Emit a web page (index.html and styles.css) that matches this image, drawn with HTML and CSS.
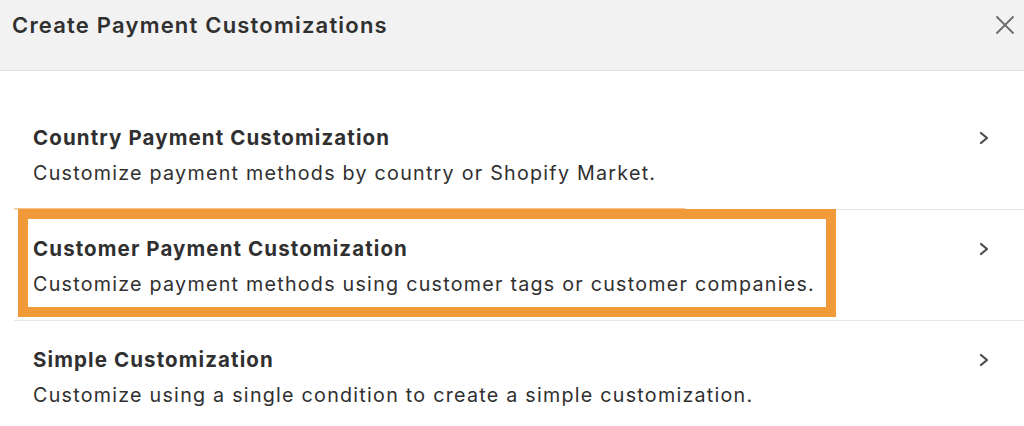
FILE: index.html
```html
<!DOCTYPE html>
<html lang="en">
<head>
    <meta charset="UTF-8">
    <meta name="viewport" content="width=device-width, initial-scale=1.0">
    <title>Create Payment Customizations</title>
    <link rel="stylesheet" href="styles.css">
</head>
<body>
    <div class="modal-header">
        <h1>Create Payment Customizations</h1>
        <button class="close-btn" aria-label="Close">
            <svg width="20" height="20" viewBox="0 0 20 20">
                <path d="M2 2 L18 18 M18 2 L2 18" stroke="#6b6b6b" stroke-width="1.8" stroke-linecap="round" fill="none"/>
            </svg>
        </button>
    </div>

    <ul class="option-list">
        <li class="option">
            <div class="option-text">
                <h2>Country Payment Customization</h2>
                <p>Customize payment methods by country or Shopify Market.</p>
            </div>
            <span class="chevron">
                <svg width="12" height="14" viewBox="0 0 12 14">
                    <path d="M3 2 L9 7 L3 12" stroke="#4a4a4a" stroke-width="2.2" stroke-linecap="round" stroke-linejoin="round" fill="none"/>
                </svg>
            </span>
        </li>
        <li class="option">
            <!-- highlight drawn over the row -->
            <div class="highlight"></div>
            <div class="option-text">
                <h2>Customer Payment Customization</h2>
                <p>Customize payment methods using customer tags or customer companies.</p>
            </div>
            <span class="chevron">
                <svg width="12" height="14" viewBox="0 0 12 14">
                    <path d="M3 2 L9 7 L3 12" stroke="#4a4a4a" stroke-width="2.2" stroke-linecap="round" stroke-linejoin="round" fill="none"/>
                </svg>
            </span>
        </li>
        <li class="option">
            <div class="option-text">
                <h2>Simple Customization</h2>
                <p>Customize using a single condition to create a simple customization.</p>
            </div>
            <span class="chevron">
                <svg width="12" height="14" viewBox="0 0 12 14">
                    <path d="M3 2 L9 7 L3 12" stroke="#4a4a4a" stroke-width="2.2" stroke-linecap="round" stroke-linejoin="round" fill="none"/>
                </svg>
            </span>
        </li>
    </ul>
</body>
</html>
```

FILE: styles.css
```css
body {
    margin: 0;
    font-family: Inter, "Noto Sans", Arial, sans-serif;
    color: #303030;
    background: #fff;
    overflow: hidden;
}

.modal-header {
    height: 70px;
    background-color: #f2f2f2;
    border-bottom: 1px solid #e3e3e3;
    display: flex;
    justify-content: space-between;
    align-items: flex-start;
    padding: 0 9px 0 12px;
}

.modal-header h1 {
    margin: 0;
    padding-top: 11px;
    font-size: 22px;
    line-height: 28px;
    font-weight: 600;
    letter-spacing: 1.2px;
    color: #303030;
}

.close-btn {
    background: none;
    border: none;
    padding: 0;
    margin-top: 15px;
    cursor: pointer;
}

.option-list {
    list-style: none;
    margin: 28px 0 0 14px;
    padding: 0;
}

.option {
    position: relative;
    display: flex;
    justify-content: space-between;
    align-items: flex-start;
    padding: 26px 34px 22px 19px;
    border-bottom: 1px solid #e6e6e6;
}

.option:last-child {
    border-bottom: none;
}

.option h2 {
    margin: 0;
    font-size: 20.5px;
    line-height: 26px;
    font-weight: 700;
    letter-spacing: 1.1px;
    color: #303030;
}

.option p {
    margin: 8px 0 0;
    font-size: 19.7px;
    line-height: 28px;
    letter-spacing: 1.25px;
    color: #303030;
}

.chevron {
    height: 26px;
    display: flex;
    align-items: center;
}

.highlight {
    position: absolute;
    left: 4px;
    top: -1px;
    width: 798px;
    height: 88px;
    border: 10px solid #f09a3a;
}

/* faint edge of the annotation above the box */
.highlight::before {
    content: "";
    position: absolute;
    left: -14px;
    top: -11px;
    width: 671px;
    height: 1px;
    background-color: #f7c48c;
}
```
